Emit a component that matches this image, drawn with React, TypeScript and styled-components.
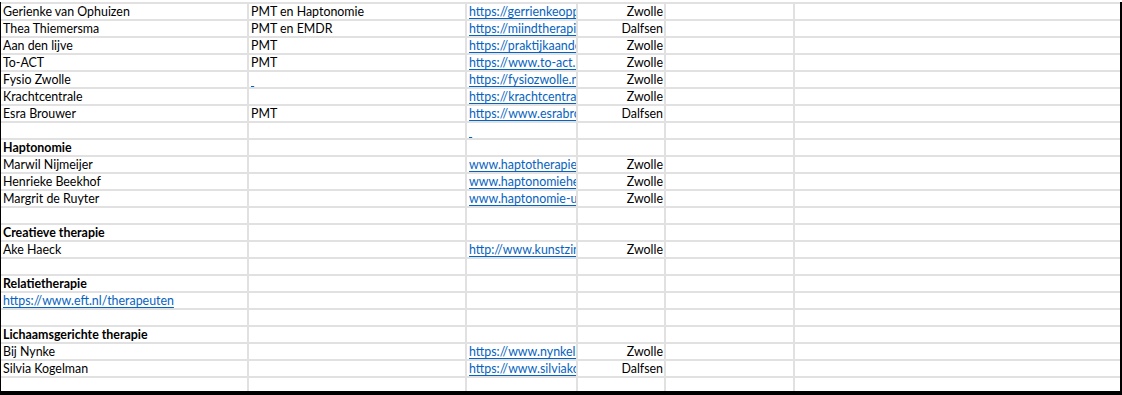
import styled, { createGlobalStyle } from "styled-components";

type RowData = {
  name?: string;
  nameUrl?: string;
  heading?: boolean;
  kind?: string;
  kindStub?: boolean;
  url?: string;
  urlStub?: boolean;
  city?: string;
};

const rows: RowData[] = [
  { name: "Gerienke van Ophuizen", kind: "PMT en Haptonomie", url: "https://gerrienkeopphuizen.nl/", city: "Zwolle" },
  { name: "Thea Thiemersma", kind: "PMT en EMDR", url: "https://miindtherapie.nl/", city: "Dalfsen" },
  { name: "Aan den lijve", kind: "PMT", url: "https://praktijkaandenlijve.nl/", city: "Zwolle" },
  { name: "To-ACT", kind: "PMT", url: "https://www.to-act.nl/", city: "Zwolle" },
  { name: "Fysio Zwolle", kindStub: true, url: "https://fysiozwolle.nl/", city: "Zwolle" },
  { name: "Krachtcentrale", url: "https://krachtcentrale.nl/", city: "Zwolle" },
  { name: "Esra Brouwer", kind: "PMT", url: "https://www.esrabrouwer.nl/", city: "Dalfsen" },
  { urlStub: true },
  { name: "Haptonomie", heading: true },
  { name: "Marwil Nijmeijer", url: "www.haptotherapiezwolle.nl", city: "Zwolle" },
  { name: "Henrieke Beekhof", url: "www.haptonomiehenriekebeekhof.nl", city: "Zwolle" },
  { name: "Margrit de Ruyter", url: "www.haptonomie-uniek.nl", city: "Zwolle" },
  {},
  { name: "Creatieve therapie", heading: true },
  { name: "Ake Haeck", url: "http://www.kunstzinnigetherapie.nl", city: "Zwolle" },
  {},
  { name: "Relatietherapie", heading: true },
  { nameUrl: "https://www.eft.nl/therapeuten" },
  {},
  { name: "Lichaamsgerichte therapie", heading: true },
  { name: "Bij Nynke", url: "https://www.nynkelichaamsgericht.nl", city: "Zwolle" },
  { name: "Silvia Kogelman", url: "https://www.silviakogelman.nl", city: "Dalfsen" },
  {},
];

const GlobalStyle = createGlobalStyle`
  html, body {
    margin: 0;
    background: #ffffff;
  }
  body {
    font-family: Lato, "Liberation Sans", sans-serif;
  }
`;

const Wrapper = styled.div`
  width: 1122px;
  height: 395px;
  padding-top: 2px;
  box-sizing: border-box;
  overflow: hidden;
`;

// spreadsheet body: grey background shows through the 2px gaps as gridlines
const Sheet = styled.div`
  height: 393px;
  box-sizing: border-box;
  display: flex;
  flex-direction: column;
  gap: 2px;
  padding-top: 2px;
  background: #e1e1e1;
  border-left: 1px solid #000;
  border-right: 2px solid #000;
  border-bottom: 4px solid #000;
  overflow: hidden;
`;

const Row = styled.div`
  display: grid;
  grid-template-columns: 246px 216px 109px 86px 127px 325px;
  column-gap: 2px;
  flex: 0 0 15px;
`;

const Cell = styled.div<{ $align?: "left" | "right"; $bold?: boolean }>`
  background: #ffffff;
  height: 15px;
  box-sizing: border-box;
  padding: 0 ${(p) => (p.$align === "right" ? "1px" : "0")} 0
    ${(p) => (p.$align === "right" ? "0" : "2px")};
  font-size: 12.4px;
  line-height: 15px;
  font-weight: ${(p) => (p.$bold ? 700 : 400)};
  color: #000;
  text-align: ${(p) => p.$align ?? "left"};
  white-space: nowrap;
  overflow: hidden;
`;

const Link = styled.a`
  color: #0563c1;
  text-decoration: underline;
  text-decoration-thickness: 1px;
  text-underline-offset: 1.5px;
`;

export default function App() {
  return (
    <>
      <GlobalStyle />
      <Wrapper>
        <Sheet>
          {rows.map((r, i) => (
            <Row key={i}>
              <Cell $bold={r.heading}>
                {r.nameUrl ? <Link href={r.nameUrl}>{r.nameUrl}</Link> : r.name}
              </Cell>
              <Cell>{r.kindStub ? <Link href="#">&nbsp;</Link> : r.kind}</Cell>
              <Cell>
                {r.url && <Link href={r.url}>{r.url}</Link>}
                {r.urlStub && <Link href="#">&nbsp;</Link>}
              </Cell>
              <Cell $align="right">{r.city}</Cell>
              <Cell />
              <Cell />
            </Row>
          ))}
        </Sheet>
      </Wrapper>
    </>
  );
}
